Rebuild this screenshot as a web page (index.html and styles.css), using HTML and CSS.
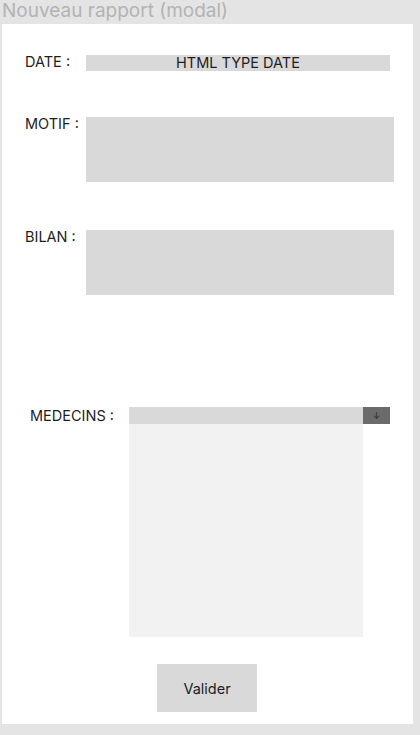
FILE: index.html
```html
<!DOCTYPE html>
<html>
<head>
    <title>Nouveau rapport</title>
    <link rel="stylesheet" href="styles.css">
</head>
<body>
    <h1 class="title">Nouveau rapport (modal)</h1>

    <div class="modal">
        <div class="row row-date">
            <span class="label">DATE :</span>
            <div class="field-date">HTML TYPE DATE</div>
        </div>

        <div class="row row-motif">
            <span class="label">MOTIF :</span>
            <div class="textarea"></div>
        </div>

        <div class="row row-bilan">
            <span class="label">BILAN :</span>
            <div class="textarea"></div>
        </div>

        <div class="row row-medecins">
            <span class="label label-medecins">MEDECINS :</span>
            <div class="select">
                <div class="select-bar">
                    <span class="select-value"></span>
                    <span class="select-arrow">↓</span>
                </div>
                <div class="select-list"></div>
            </div>
        </div>

        <div class="actions">
            <button class="btn-valider">Valider</button>
        </div>
    </div>
</body>
</html>
```

FILE: styles.css
```css
body {
    margin: 0;
    background-color: #e4e4e4;
    font-family: Inter, "Noto Sans", sans-serif;
    color: #1e1e1e;
}
.title {
    margin: 0;
    padding-left: 2px;
    height: 24px;
    font-size: 19px;
    font-weight: 400;
    line-height: 22px;
    color: #b3b3b3;
}
.modal {
    margin-left: 2px;
    width: 411px;
    height: 700px;
    background: white;
    box-sizing: border-box;
    padding-left: 23px;
    padding-top: 31px;
}
.row {
    display: flex;
    align-items: flex-start;
}
.label {
    width: 61px;
    font-size: 14.5px;
    line-height: 14px;
    white-space: nowrap;
}
.field-date {
    width: 304px;
    height: 16px;
    background: #d9d9d9;
    font-size: 14.5px;
    line-height: 16px;
    text-align: center;
}
.row-motif {
    margin-top: 46px;
}
.row-bilan {
    margin-top: 48px;
}
.textarea {
    width: 308px;
    height: 65px;
    background: #d9d9d9;
}
.row-medecins {
    margin-top: 112px;
    padding-left: 5px;
}
.label-medecins {
    width: 99px;
    padding-top: 2px;
}
.select {
    width: 261px;
}
.select-bar {
    display: flex;
    height: 17px;
    background: #d9d9d9;
}
.select-value {
    flex: 1;
}
.select-arrow {
    width: 27px;
    background: #6b6b6b;
    color: #2a2a2a;
    font-size: 9px;
    line-height: 17px;
    text-align: center;
}
.select-list {
    width: 234px;
    height: 213px;
    background: #f2f2f2;
}
.actions {
    margin-top: 27px;
    padding-left: 132px;
}
.btn-valider {
    width: 100px;
    height: 48px;
    border: none;
    background: #d9d9d9;
    font-family: Inter, "Noto Sans", sans-serif;
    font-size: 14.5px;
    color: #1e1e1e;
    padding: 0;
}
```
